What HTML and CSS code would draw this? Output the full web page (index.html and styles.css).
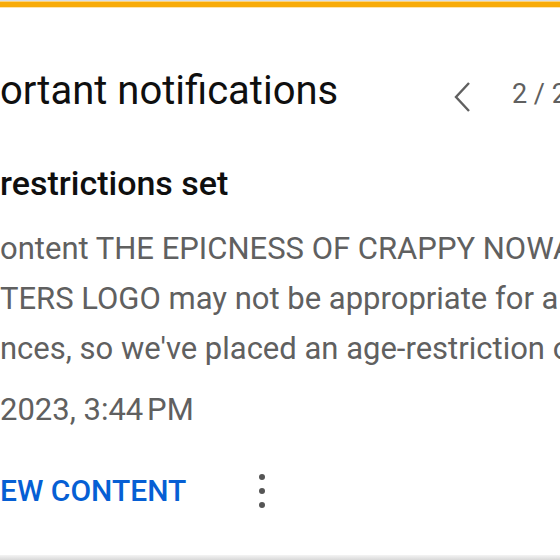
FILE: index.html
```html
<!DOCTYPE html>
<html lang="en">
<head>
<meta charset="utf-8">
<title>Important notifications</title>
<link rel="stylesheet" href="styles.css">
</head>
<body>
<div class="page">
  <div class="card">
    <div class="accent"></div>
    <header class="head">
      <h1 class="title">ortant notifications</h1>
      <svg class="chev" width="20" height="32" viewBox="0 0 20 32" aria-hidden="true"><path d="M17 2 L4 16 L17 30" fill="none" stroke="#606060" stroke-width="2.4"/></svg>
      <span class="count">2 / 2</span>
    </header>
    <section class="item">
      <h2 class="item-title">restrictions set</h2>
      <p class="item-body">
        <span class="line">ontent THE EPICNESS OF CRAPPY NOWADAYS</span>
        <span class="line">TERS LOGO may not be appropriate for all</span>
        <span class="line">nces, so we've placed an age-restriction on it.</span>
      </p>
      <p class="date">2023, 3:44&#8239;PM</p>
      <div class="actions">
        <a class="btn">EW CONTENT</a>
        <span class="more"><svg width="8" height="36" viewBox="0 0 8 36" aria-hidden="true"><circle cx="4" cy="4" r="3" fill="#555"/><circle cx="4" cy="18" r="3" fill="#555"/><circle cx="4" cy="32" r="3" fill="#555"/></svg></span>
      </div>
    </section>
  </div>
  <div class="edge"></div>
</div>
</body>
</html>
```
FILE: styles.css
```css
html, body {
  margin: 0;
  padding: 0;
  background: #fff;
}
body {
  width: 560px;
  height: 560px;
  overflow: hidden;
  font-family: Roboto, "Liberation Sans", sans-serif;
}
.page {
  height: 560px;
  display: flex;
  flex-direction: column;
}
.card {
  flex: 1;
  overflow: hidden;
  background: #fff;
}
.accent {
  height: 9px;
  background: linear-gradient(#d9dde2 0 1px, #fbd27a 1px 2px, #f8ab08 2px 7px, #fde4b0 7px 8px, #fff 8px);
}
.head {
  display: grid;
  grid-template-columns: 452px 60px auto;
  align-items: center;
  margin-top: 58px;
  white-space: nowrap;
}
.title {
  margin: 0;
  font-size: 40px;
  line-height: 48px;
  font-weight: 400;
  color: #0f0f0f;
}
.chev {
  display: block;
  margin: 6px 0 -6px;
}
.count {
  font-size: 27px;
  color: #606060;
  line-height: 40px;
  margin: 3px 0 -3px;
}
.item {
  white-space: nowrap;
}
.item-title {
  margin: 46px 0 0;
  font-size: 34px;
  line-height: 44px;
  font-weight: 500;
  color: #0f0f0f;
}
.item-body {
  margin: 19px 0 0;
  font-size: 31px;
  line-height: 50px;
  color: #606060;
}
.line {
  display: block;
}
.date {
  margin: 14px 0 0;
  font-size: 31px;
  line-height: 44px;
  color: #606060;
}
.actions {
  display: grid;
  grid-template-columns: 248px 28px;
  align-items: center;
  margin-top: 37px;
}
.btn {
  font-size: 30px;
  line-height: 44px;
  font-weight: 500;
  color: #065fd4;
}
.more {
  display: flex;
  justify-content: center;
}
.more svg {
  display: block;
}
.edge {
  height: 5px;
  background: linear-gradient(#f4f4f4, #d8d8d8);
}
```
